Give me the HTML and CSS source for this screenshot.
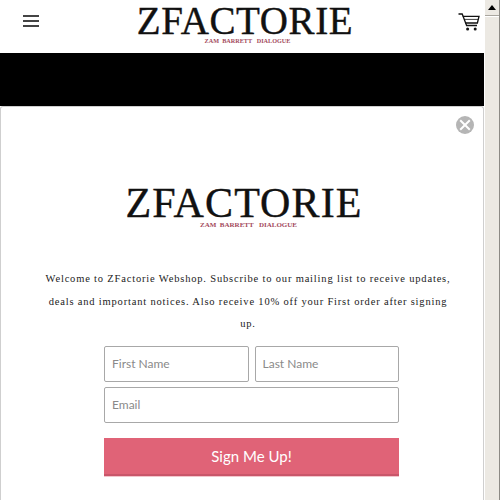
FILE: index.html
```html
<!DOCTYPE html>
<html>

<head>
  <title>ZFactorie</title>
  <meta charset="utf-8" />
  <link rel="stylesheet" href="styles.css">
</head>

<body>
  <div id="page">
    <div id="main">
      <div id="header">
        <button class="menu-button" aria-label="Menu">
          <span class="menu-line"></span>
          <span class="menu-line"></span>
          <span class="menu-line"></span>
        </button>
        <div class="logo logo-small">
          <div class="logo-name">ZFACTORIE</div>
          <div class="logo-tag">ZAM&nbsp;&nbsp;BARRETT&nbsp;&nbsp;&nbsp;DIALOGUE</div>
        </div>
        <svg class="cart-icon" width="22" height="19" viewBox="0 0 22 19" fill="none" stroke="#111111" stroke-width="1.3">
          <path d="M0.5 1H4.2L8.6 12.5H19" />
          <path d="M4.8 3.4H21L19.4 10H7.4" />
          <path d="M6.2 6.4L20 6.4" stroke-width="0.8" />
          <circle cx="9.6" cy="16" r="1.5" fill="#111111" stroke="none" />
          <circle cx="17.2" cy="16" r="1.5" fill="#111111" stroke="none" />
        </svg>
      </div>
      <div id="banner"></div>
      <div id="popup">
        <button class="close-button" aria-label="Close">
          <svg width="20" height="20" viewBox="0 0 20 20">
            <circle cx="10" cy="10" r="9" fill="#b5b5b5" />
            <path d="M5.2 5.2L14.8 14.8M14.8 5.2L5.2 14.8" stroke="#ffffff" stroke-width="2" />
          </svg>
        </button>
        <div class="logo logo-large">
          <div class="logo-name">ZFACTORIE</div>
          <div class="logo-tag">ZAM&nbsp;&nbsp;BARRETT&nbsp;&nbsp;&nbsp;DIALOGUE</div>
        </div>
        <p class="intro">Welcome to ZFactorie Webshop. Subscribe to our mailing list to receive updates, deals and important notices. Also receive 10% off your First order after signing up.</p>
        <form class="signup-form">
          <div class="name-row">
            <input type="text" class="input" placeholder="First Name" />
            <input type="text" class="input" placeholder="Last Name" />
          </div>
          <input type="text" class="input" placeholder="Email" />
          <button type="button" class="submit-button">Sign Me Up!</button>
        </form>
      </div>
    </div>
    <div id="scrollbar">
      <div class="scroll-button"><span class="scroll-arrow"></span></div>
      <div class="scroll-thumb"></div>
    </div>
  </div>
</body>

</html>
```

FILE: styles.css
```css
html,
body {
  margin: 0;
  padding: 0;
  background-color: #ffffff;
  overflow: hidden;
}

#page {
  display: flex;
  width: 500px;
  height: 500px;
  overflow: hidden;
}

#main {
  width: 484px;
  flex-shrink: 0;
}

#header {
  display: flex;
  justify-content: space-between;
  align-items: flex-start;
  height: 53px;
  padding: 0 4px 0 22px;
  box-sizing: border-box;
}

.menu-button {
  display: flex;
  flex-direction: column;
  gap: 3px;
  width: 16px;
  margin: 15px 0 0 1px;
  padding: 0;
  background: none;
  border: none;
}

.menu-line {
  display: block;
  height: 2px;
  width: 16px;
  background-color: #444444;
}

.cart-icon {
  margin-top: 13px;
}

.logo {
  text-align: center;
  font-family: "Liberation Serif", serif;
  color: #111111;
}

.logo-small {
  margin: 1px 7px 0 0;
}

.logo-name {
  white-space: nowrap;
  line-height: 1;
  -webkit-text-stroke: 0.4px #111111;
}

.logo-small .logo-name {
  font-size: 39px;
  letter-spacing: 0.6px;
}

.logo-tag {
  margin-top: -3px;
  color: #a34a5c;
  font-weight: bold;
  white-space: nowrap;
}

.logo-small .logo-tag {
  padding-left: 5px;
  font-size: 6.2px;
}

#banner {
  height: 53px;
  background-color: #000000;
}

#popup {
  position: relative;
  height: 394px;
  box-sizing: border-box;
  padding-top: 75px;
  background-color: #ffffff;
  border: 1px solid #cfcfcf;
  border-bottom: none;
  border-radius: 3px 3px 0 0;
}

.close-button {
  position: absolute;
  top: 8px;
  right: 8px;
  width: 20px;
  height: 20px;
  padding: 0;
  background: none;
  border: none;
}

.logo-large {
  padding-left: 4px;
}

.logo-large .logo-name {
  font-size: 42px;
  letter-spacing: 1.1px;
}

.logo-large .logo-tag {
  padding-left: 9px;
  font-size: 7px;
}

.intro {
  width: 408px;
  margin: 39px 0 0 43px;
  font-family: "Liberation Serif", serif;
  font-size: 10.5px;
  line-height: 22.5px;
  letter-spacing: 0.82px;
  text-align: center;
  color: #222222;
}

.signup-form {
  display: flex;
  flex-direction: column;
  width: 295px;
  margin: 10px 0 0 103px;
}

.name-row {
  display: flex;
  gap: 6px;
  margin-bottom: 5px;
}

.input {
  width: 100%;
  min-width: 0;
  height: 36px;
  padding: 0 7px;
  box-sizing: border-box;
  border: 1px solid #a8a8a8;
  border-radius: 2px;
  font-family: Lato, sans-serif;
  font-size: 12px;
  color: #333333;
  background-color: #ffffff;
}

.input::placeholder {
  color: #8a8a8a;
  opacity: 1;
}

.submit-button {
  height: 38px;
  margin-top: 15px;
  padding: 0;
  border: none;
  border-bottom: 2px solid #c9566a;
  box-shadow: 0 1px 0 #f3c6cd;
  background-color: #e06377;
  color: #ffffff;
  font-family: Lato, sans-serif;
  font-size: 15px;
}

#scrollbar {
  display: flex;
  flex-direction: column;
  width: 16px;
  flex-shrink: 0;
  box-sizing: border-box;
  background-color: #ffffff;
  border-left: 1px solid #ffffff;
  border-right: 1px solid #8c8a85;
}

.scroll-button {
  display: flex;
  justify-content: center;
  align-items: center;
  height: 15px;
  background-color: #ece9e3;
  border-bottom: 1px solid #a9a69f;
}

.scroll-arrow {
  width: 0;
  height: 0;
  border-left: 4px solid transparent;
  border-right: 4px solid transparent;
  border-bottom: 5px solid #000000;
}

.scroll-thumb {
  flex: 1;
  margin-top: 1px;
  background-color: #ece9e3;
}
```
